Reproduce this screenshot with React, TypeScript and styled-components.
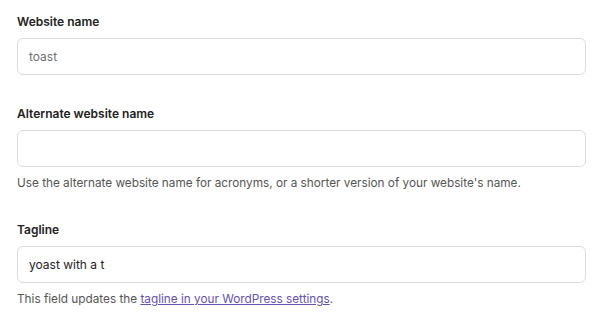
import React from "react";
import styled, { createGlobalStyle } from "styled-components";

const Global = createGlobalStyle`
  html, body { margin: 0; padding: 0; background: #fff; }
  body { font-family: Inter, "Noto Sans", "Liberation Sans", sans-serif; -webkit-font-smoothing: antialiased; }
`;

const Page = styled.div`
  display: flex;
  flex-direction: column;
  gap: 31px;
  padding: 14px 14px 0 17px;
`;

const Field = styled.div`
  display: flex;
  flex-direction: column;
`;

const Label = styled.label`
  font-size: 12px;
  line-height: 16px;
  font-weight: 600;
  color: #222;
  margin-bottom: 8px;
`;

const Input = styled.div<{ $muted?: boolean }>`
  box-sizing: border-box;
  height: 37px;
  border: 1px solid #dcdcde;
  border-radius: 6px;
  padding: 0 11px;
  display: flex;
  align-items: center;
  font-size: 12px;
  color: ${(p) => (p.$muted ? "#707070" : "#222")};
`;

const Help = styled.p`
  margin: 8px 0 0;
  font-size: 11.77px;
  line-height: 16px;
  color: #555;
`;

const Link = styled.a`
  color: #6650b0;
  text-decoration: underline;
`;

export default function App() {
  return (
    <>
      <Global />
      <Page>
        <Field>
          <Label>Website name</Label>
          <Input $muted>toast</Input>
        </Field>
        <Field>
          <Label>Alternate website name</Label>
          <Input />
          <Help>
            Use the alternate website name for acronyms, or a shorter version of your website's name.
          </Help>
        </Field>
        <Field>
          <Label>Tagline</Label>
          <Input>yoast with a t</Input>
          <Help>
            This field updates the <Link href="#">tagline in your WordPress settings</Link>.
          </Help>
        </Field>
      </Page>
    </>
  );
}
